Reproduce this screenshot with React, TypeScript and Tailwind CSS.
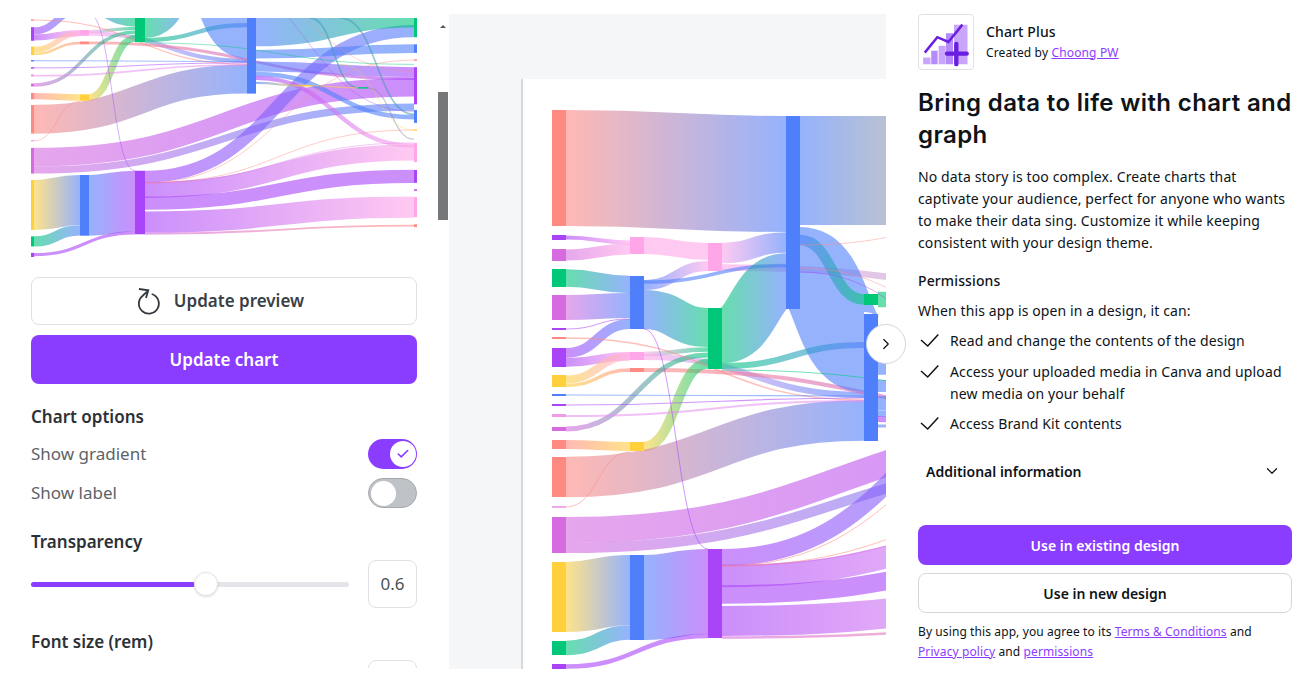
import React from "react";
import { Check, ChevronDown, ChevronRight } from "lucide-react";

const R = "#ff8a82", P = "#ffa6e8", B = "#4f7ffb", G = "#00c878", V = "#a944f9", M = "#d66be0", Y = "#ffd03c", D = "#8a97b5";

type L = [number, number, number, number, number, number, string, string];
const links: L[] = [
  [566, 110, 226, 786, 116, 232, R, B],
  [800, 116, 225, 886, 116, 225, B, D],
  [566, 235, 240, 630, 241, 244, V, P],
  [566, 249, 261, 630, 244, 254, M, P],
  [644, 237, 254, 708, 243, 260, P, P],
  [644, 280, 290, 708, 261, 271, B, P],
  [722, 243, 263, 786, 232, 253, P, B],
  [722, 264, 271, 1107, 290, 296, P, D],
  [644, 280, 284, 786, 264, 267, B, B],
  [722, 308, 363, 786, 253, 309, G, B],
  [566, 269, 287, 630, 276, 293, G, B],
  [566, 295, 320, 630, 293, 318, M, B],
  [566, 348, 358, 630, 319, 329, V, B],
  [644, 290, 329, 708, 308, 347, B, G],
  [566, 358, 367, 630, 352, 360, V, P],
  [566, 375, 384, 630, 353, 360, Y, P],
  [566, 384, 387, 630, 368, 372, Y, R],
  [644, 352, 356, 708, 347, 352, P, G],
  [644, 354, 360, 864, 392, 398, P, B],
  [644, 368, 372, 1107, 418, 422, R, V],
  [566, 427, 431, 708, 352, 358, M, G],
  [566, 440, 449, 630, 442, 451, R, Y],
  [644, 442, 451, 708, 358, 369, Y, G],
  [566, 457, 497, 864, 400, 441, R, B],
  [566, 517, 543, 1107, 419, 445, M, V],
  [566, 543, 553, 1107, 455, 465, M, B],
  [566, 562, 632, 630, 555, 625, Y, B],
  [566, 641, 655, 630, 625, 640, G, B],
  [566, 664, 669, 708, 634, 638, V, V],
  [644, 555, 640, 708, 549, 634, B, V],
  [722, 549, 566, 1107, 345, 362, V, B],
  [722, 567, 585, 1107, 510, 537, V, P],
  [722, 585, 604, 1107, 548, 566, V, V],
  [722, 605, 637, 1107, 586, 614, V, P],
  [722, 637, 638, 1107, 624, 628, M, R],
  [800, 225, 309, 864, 314, 390, B, B],
  [800, 235, 245, 864, 294, 305, B, G],
  [722, 363, 369, 864, 342, 348, G, B],
  [878, 294, 305, 1107, 300, 320, G, G],
  [878, 330, 378, 1107, 310, 345, B, G],
  [878, 380, 392, 1107, 372, 384, B, B],
  [878, 396, 410, 1107, 404, 418, B, V],
  [878, 411, 416, 1107, 470, 478, B, B],
  [878, 417, 421, 1107, 510, 518, V, P],
  [878, 424, 428, 945, 429, 431, B, Y],
];

type T = [number, number, number, number, string, number];
const threads: T[] = [
  [566, 329, 630, 319, V, 1],
  [566, 338, 864, 400, R, 1.4],
  [566, 395, 864, 396, B, 1.2],
  [566, 405, 864, 398, V, 1.2],
  [566, 416, 864, 401, "#e58cf0", 2],
  [566, 507, 630, 452, R, 1],
  [644, 329, 708, 549, V, 1],
  [800, 245, 1107, 190, R, 0.8],
  [800, 268, 1107, 410, R, 0.8],
  [800, 272, 1107, 466, V, 0.8],
  [722, 370, 1107, 400, G, 1],
  [722, 566, 1107, 394, R, 1],
  [722, 566, 1107, 492, R, 1],
  [722, 566, 1107, 510, M, 0.8],
  [956, 335, 1026, 433, "#3f9bb0", 2],
  [1000, 335, 1107, 470, "#3f9bb0", 2],
  [959, 430, 1026, 433, Y, 1.4],
  [1040, 433, 1107, 505, "#8a8fa5", 1.4],
  [1000, 400, 1107, 492, Y, 0.8],
];

const nodes: [number, number, number, number, string][] = [
  [552, 110, 226, 14, R], [552, 235, 240, 14, V], [552, 249, 261, 14, M], [552, 269, 287, 14, G],
  [552, 295, 320, 14, M], [552, 328, 330, 14, V], [552, 337, 339, 14, R], [552, 348, 367, 14, V],
  [552, 375, 387, 14, Y], [552, 394, 396, 14, B], [552, 404, 406, 14, V], [552, 414, 417, 14, "#f09be8"],
  [552, 427, 431, 14, M], [552, 440, 449, 14, R], [552, 457, 497, 14, R], [552, 506, 508, 14, "#f0a8e8"],
  [552, 517, 553, 14, M], [552, 562, 632, 14, Y], [552, 641, 655, 14, G], [552, 664, 670, 14, V],
  [630, 237, 254, 14, P], [630, 276, 329, 14, B], [630, 352, 360, 14, P], [630, 368, 372, 14, R],
  [630, 442, 451, 14, Y], [630, 555, 640, 14, B],
  [708, 243, 271, 14, P], [708, 308, 369, 14, G], [708, 549, 638, 14, V],
  [786, 116, 309, 14, B], [864, 294, 305, 14, G], [864, 314, 441, 14, B],
  [945, 429, 431, 14, Y], [1026, 432, 434, 14, G],
  [1107, 335, 362, 4, G], [1107, 372, 384, 4, B], [1107, 393, 395, 4, R], [1107, 404, 456, 4, V],
  [1107, 464, 482, 4, B], [1107, 491, 493, 4, Y], [1107, 510, 537, 4, P], [1107, 548, 566, 4, V],
  [1107, 575, 577, 4, V], [1107, 586, 614, 4, P], [1107, 624, 628, 4, R],
];

const table: [number, number][] = [
  [552, 31], [566, 34], [630, 80], [644, 89], [708, 135], [722, 145], [786, 192], [800, 202],
  [864, 247], [878, 256], [945, 302], [959, 312], [1026, 358], [1040, 368], [1107, 414], [1111, 417],
];
const smallX = (x: number) => {
  for (let i = 1; i < table.length; i++) {
    if (x <= table[i][0]) {
      const [a, b] = table[i - 1];
      const [c, d] = table[i];
      return b + ((x - a) * (d - b)) / (c - a);
    }
  }
  return 417;
};
const smallY = (y: number) => 180 + 0.714 * (y - 562);
const same = (v: number) => v;

function Sankey({ id, viewBox, className, fx = same, fy = same, k = 1 }: {
  id: string; viewBox: string; className: string; fx?: (v: number) => number; fy?: (v: number) => number; k?: number;
}) {
  return (
    <svg viewBox={viewBox} className={className}>
      <defs>
        {links.map((l, i) => (
          <linearGradient key={i} id={`${id}${i}`} gradientUnits="userSpaceOnUse" x1={fx(l[0])} x2={fx(l[3])} y1="0" y2="0">
            <stop offset="0" stopColor={l[6]} />
            <stop offset="1" stopColor={l[7]} />
          </linearGradient>
        ))}
      </defs>
      {links.map(([ax, t0, b0, bx, t1, b1], i) => {
        const x0 = fx(ax), x1 = fx(bx), y0 = fy((t0 + b0) / 2), y1 = fy((t1 + b1) / 2);
        const m = (x0 + x1) / 2;
        const w = (((b0 - t0) + (b1 - t1)) / 2) * k;
        return (
          <path
            key={i}
            fill="none"
            stroke={`url(#${id}${i})`}
            strokeWidth={w}
            opacity={0.6}
            d={`M${x0} ${y0}C${m} ${y0} ${m} ${y1} ${x1} ${y1}`}
          />
        );
      })}
      {threads.map(([ax, ay, bx, by, c, w], i) => {
        const x0 = fx(ax), x1 = fx(bx), y0 = fy(ay), y1 = fy(by);
        const m = (x0 + x1) / 2;
        return (
          <path
            key={i}
            fill="none"
            stroke={c}
            strokeWidth={w * (k < 1 ? 0.8 : 1)}
            opacity={0.55}
            d={`M${x0} ${y0}C${m} ${y0} ${m} ${y1} ${x1} ${y1}`}
          />
        );
      })}
      {nodes.map(([x, y0, y1, w, c], i) => (
        <rect key={i} x={fx(x)} y={fy(y0)} width={fx(x + w) - fx(x)} height={fy(y1) - fy(y0)} fill={c} />
      ))}
    </svg>
  );
}

function Perm({ children }: { children: React.ReactNode }) {
  return (
    <div className="flex gap-[10px] leading-[22px]">
      <svg viewBox="0 0 22 20" className="mt-[1px] w-[22px] h-[20px] shrink-0">
        <path d="M3 9L9.700 15L20.300 3.500" fill="none" stroke="#0e1318" strokeWidth="1.5" />
      </svg>
      <div>{children}</div>
    </div>
  );
}

export default function App() {
  return (
    <div className="relative flex w-[1313px] h-[678px] overflow-hidden bg-white text-[#0e1318] font-['Noto_Sans',sans-serif]">
      {/* left panel */}
      <div className="w-[438px] h-[668px] pt-[18px] pl-[31px] pr-[21px] overflow-hidden shrink-0">
        <Sankey id="a" viewBox="31 18 386 239" fx={smallX} fy={smallY} k={0.714} className="block w-[386px] h-[239px] blur-[0.4px]" />
        <button className="mt-[20px] w-[386px] h-[48px] rounded-lg border border-[#dfe1e4] bg-white flex items-center justify-center gap-[12px] pr-[8px] text-[17px] font-semibold text-[#3a3f45]">
          <svg viewBox="0 0 26 28" className="w-[26px] h-[28px] mt-[2px]">
            <path d="M15.700 6A10 10 0 1 1 6.700 7.700L12.300 2.300M3 1L12.300 2.300L10 10" fill="none" stroke="#33383d" strokeWidth="1.8" />
          </svg>
          Update preview
        </button>
        <button className="mt-[10px] w-[386px] h-[49px] rounded-lg bg-[#8b3dff] text-white text-[17px] font-semibold">Update chart</button>
        <div className="mt-[22px] text-[17px] leading-[22px] font-semibold text-[#2c3137]">Chart options</div>
        <div className="mt-[11px] flex items-center justify-between h-[30px]">
          <span className="text-[17px] text-[#5d6369]">Show gradient</span>
          <div className="w-[49px] h-[30px] rounded-full bg-[#8b3dff] flex items-center justify-end pr-[1px]">
            <div className="w-[26px] h-[26px] rounded-full bg-white flex items-center justify-center">
              <Check className="w-[14px] h-[14px] text-[#8b3dff]" strokeWidth={2.8} />
            </div>
          </div>
        </div>
        <div className="mt-[9px] flex items-center justify-between h-[30px]">
          <span className="text-[17px] text-[#5d6369]">Show label</span>
          <div className="w-[49px] h-[30px] rounded-full bg-[#bfc3c7] border border-[#a5a9ad] flex items-center pl-[2px]">
            <div className="w-[25px] h-[25px] rounded-full bg-white" />
          </div>
        </div>
        <div className="mt-[23px] text-[17px] leading-[22px] font-semibold text-[#2c3137]">Transparency</div>
        <div className="mt-[7px] flex items-center justify-between">
          <div className="relative w-[318px] h-[5px] rounded-full bg-[#e3e5e8]">
            <div className="w-[164px] h-[5px] rounded-full bg-[#8b3dff]" />
            <div className="absolute left-[163px] top-[-10px] w-[24px] h-[24px] rounded-full bg-white border border-[#e3e5e8] shadow-sm" />
          </div>
          <div className="w-[49px] h-[48px] rounded-lg border border-[#dfe1e4] flex items-center justify-center text-[17px] text-[#4b5157]">0.6</div>
        </div>
        <div className="mt-[23px] text-[17px] leading-[22px] font-semibold text-[#2c3137]">Font size (rem)</div>
        <div className="mt-[7px] ml-[337px] w-[49px] h-[49px] rounded-lg border border-[#dfe1e4]" />
      </div>

      {/* scrollbar */}
      <div className="relative w-[11px] h-[668px] shrink-0">
        <div className="absolute left-[2px] top-[25px] w-0 h-0 border-l-[3px] border-r-[3px] border-b-[3px] border-l-transparent border-r-transparent border-b-[#55585b]" />
        <div className="absolute left-0 top-[92px] w-[10px] h-[128px] bg-[#757779]" />
      </div>

      {/* preview */}
      <div className="mt-[14px] w-[437px] h-[655px] bg-[#f5f6f8] pl-[72px] pt-[65px] overflow-hidden shrink-0">
        <div className="w-[365px] h-[590px] bg-white border-l-2 border-[#d8d9db] overflow-hidden">
          <Sankey id="b" viewBox="523 79 363 590" className="block w-[363px] h-[590px] blur-[0.3px]" />
        </div>
      </div>
      <div className="absolute left-[866px] top-[324px] w-[40px] h-[40px] rounded-full bg-white border border-[#d5d7da] flex items-center justify-center">
        <ChevronRight className="w-[18px] h-[18px] text-[#0e1318]" strokeWidth={1.6} />
      </div>

      {/* details */}
      <div className="pt-[14px] pl-[32px] w-[427px] text-[14px] tracking-[0.12px]">
        <div className="w-[374px]">
          <div className="flex items-center gap-[12px]">
            <div className="w-[56px] h-[56px] rounded-[4px] border border-[#dfe1e4]">
              <svg viewBox="0 0 56 56" className="w-full h-full">
                <path fill="#c9a6fb" d="M4.300 44H12V51H4.300zM20.300 32H27.700V51H20.300zM36.300 10H50.300V51H36.300z" />
                <path fill="#b48bf8" d="M12.700 37H19.300V51H12.700zM28 19H35.300V51H28z" />
                <path fill="none" stroke="#6a1ee0" strokeWidth="2.600" d="M6 39L19 23L30.500 28L45 10" />
                <path fill="none" stroke="#6a1ee0" strokeWidth="4.500" strokeLinecap="round" d="M29 40H49.500M38.700 30V51" />
              </svg>
            </div>
            <div>
              <div className="text-[14px] leading-[20px] font-medium">Chart Plus</div>
              <div className="mt-[1px] text-[12px] leading-[20px] tracking-[0.15px]">
                Created by <span className="text-[#8b3dff] underline">Choong PW</span>
              </div>
            </div>
          </div>
          <h1 className="mt-[17px] text-[24px] leading-[32px] font-semibold font-['Inter',sans-serif] tracking-[0.37px]">Bring data to life with chart and graph</h1>
          <p className="mt-[15px] leading-[22px]">
            No data story is too complex. Create charts that captivate your audience, perfect for anyone who wants to make their data sing. Customize it while keeping consistent with your design theme.
          </p>
          <div className="mt-[16px] leading-[22px] font-medium">Permissions</div>
          <div className="mt-[8px] leading-[22px]">When this app is open in a design, it can:</div>
          <div className="mt-[8px] flex flex-col gap-[9px]">
            <Perm>Read and change the contents of the design</Perm>
            <Perm>Access your uploaded media in Canva and upload new media on your behalf</Perm>
            <div className="-mt-[1px]"><Perm>Access Brand Kit contents</Perm></div>
          </div>
          <div className="mt-[25px] flex items-center justify-between pl-[8px] pr-[11px] h-[22px] font-semibold tracking-normal">
            Additional information
            <ChevronDown className="w-[18px] h-[18px]" strokeWidth={1.6} />
          </div>
          <button className="mt-[43px] w-[374px] h-[40px] rounded-lg bg-[#8b3dff] text-white font-semibold tracking-normal block">Use in existing design</button>
          <button className="mt-[8px] w-[374px] h-[40px] rounded-lg border border-[#d5d7da] font-semibold tracking-normal block">Use in new design</button>
          <p className="mt-[9px] text-[12px] leading-[20px] tracking-[0.1px]">
            By using this app, you agree to its <span className="text-[#8b3dff] underline">Terms &amp; Conditions</span> and{" "}
            <span className="text-[#8b3dff] underline">Privacy policy</span> and <span className="text-[#8b3dff] underline">permissions</span>
          </p>
        </div>
      </div>
    </div>
  );
}
